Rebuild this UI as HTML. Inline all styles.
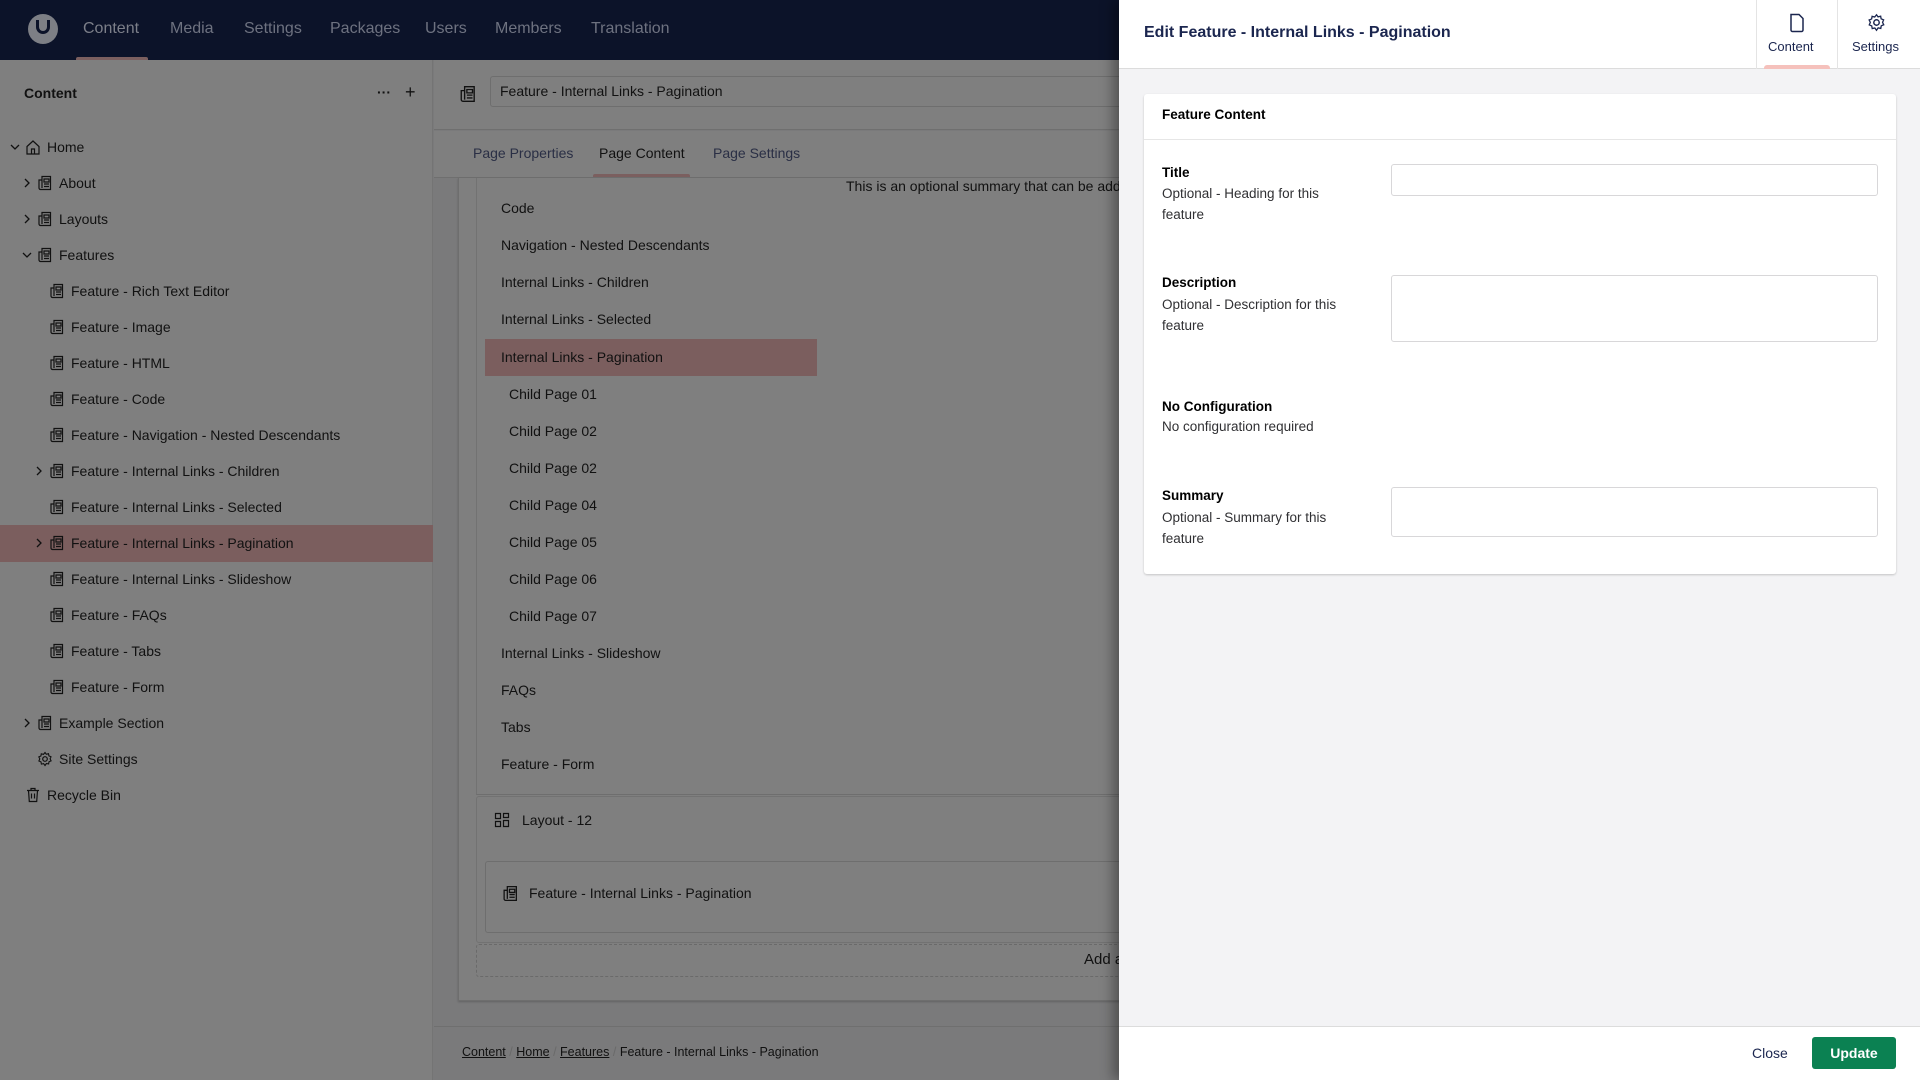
<!DOCTYPE html>
<html><head><meta charset="utf-8"><style>
*{margin:0;padding:0;box-sizing:border-box}
body{width:1920px;height:1080px;overflow:hidden;position:relative;font-family:"Liberation Sans",sans-serif;font-size:14px;color:#111;background:#7a7a7b}
.a{position:absolute}
.t{position:absolute;white-space:nowrap;line-height:20px}
.ic{position:absolute;width:16px;height:16px}
.chev{position:absolute;width:10px;height:10px}
</style></head><body>
<!-- top bar -->
<div class="a" style="left:0;top:0;width:1119px;height:60px;background:#0c1329"></div>
<div class="a" style="left:28px;top:14px;width:30px;height:30px;border-radius:50%;background:#7d7f85"></div>
<div class="a" style="left:36px;top:20px;width:14px;height:14px;border:3px solid #0c1329;border-top:none;border-radius:0 0 7px 7px"></div>
<div class="t" style="left:83px;top:19px;font-size:16px;color:#7c7f89">Content</div>
<div class="a" style="left:76px;top:57px;width:72px;height:3px;background:#7b5f5f;border-radius:2px 2px 0 0"></div>
<div class="t" style="left:170px;top:19px;font-size:16px;color:#6e7280">Media</div>
<div class="t" style="left:244px;top:19px;font-size:16px;color:#6e7280">Settings</div>
<div class="t" style="left:330px;top:19px;font-size:16px;color:#6e7280">Packages</div>
<div class="t" style="left:425px;top:19px;font-size:16px;color:#6e7280">Users</div>
<div class="t" style="left:495px;top:19px;font-size:16px;color:#6e7280">Members</div>
<div class="t" style="left:591px;top:19px;font-size:16px;color:#6e7280">Translation</div>

<!-- sidebar -->
<div class="a" style="left:0;top:60px;width:433px;height:1020px;background:#7f7f7f;border-right:1px solid #747474"></div>
<div class="t" style="left:24px;top:83px;font-weight:bold;font-size:14px">Content</div>
<div class="t" style="left:377px;top:82px;font-weight:bold">···</div>
<div class="t" style="left:405px;top:82px;font-size:18px">+</div>
<div class="a" style="left:0;top:525px;width:433px;height:37px;background:#7b5e5e"></div>

<svg width="0" height="0" style="position:absolute"><defs>
<symbol id="doc" viewBox="0 0 16 16"><path d="M5 1.5h8.5v13H3.5a1.5 1.5 0 0 1-1.5-1.5V5h3z M5 1.5v11.5 M7 4h5v3H7z M7 9h5 M7 11.5h5" fill="none" stroke="#111" stroke-width="1.2"/></symbol>
<symbol id="chr" viewBox="0 0 10 10"><path d="M3 1l4 4-4 4" fill="none" stroke="#111" stroke-width="1.3"/></symbol>
<symbol id="chd" viewBox="0 0 10 10"><path d="M1 3l4 4 4-4" fill="none" stroke="#111" stroke-width="1.3"/></symbol>
</defs></svg>

<svg class="chev" style="left:10px;top:142px"><use href="#chd"/></svg>
<svg class="ic" style="left:25px;top:139px" viewBox="0 0 16 16"><path d="M2 7.5L8 2l6 5.5V15H2z M6.5 15v-5h3v5" fill="none" stroke="#111" stroke-width="1.2"/></svg>
<div class="t" style="left:47px;top:137px">Home</div>

<svg class="chev" style="left:22px;top:178px"><use href="#chr"/></svg>
<svg class="ic" style="left:37px;top:175px"><use href="#doc"/></svg>
<div class="t" style="left:59px;top:173px">About</div>
<svg class="chev" style="left:22px;top:214px"><use href="#chr"/></svg>
<svg class="ic" style="left:37px;top:211px"><use href="#doc"/></svg>
<div class="t" style="left:59px;top:209px">Layouts</div>
<svg class="chev" style="left:22px;top:250px"><use href="#chd"/></svg>
<svg class="ic" style="left:37px;top:247px"><use href="#doc"/></svg>
<div class="t" style="left:59px;top:245px">Features</div>

<svg class="ic" style="left:49px;top:283px"><use href="#doc"/></svg><div class="t" style="left:71px;top:281px">Feature - Rich Text Editor</div>
<svg class="ic" style="left:49px;top:319px"><use href="#doc"/></svg><div class="t" style="left:71px;top:317px">Feature - Image</div>
<svg class="ic" style="left:49px;top:355px"><use href="#doc"/></svg><div class="t" style="left:71px;top:353px">Feature - HTML</div>
<svg class="ic" style="left:49px;top:391px"><use href="#doc"/></svg><div class="t" style="left:71px;top:389px">Feature - Code</div>
<svg class="ic" style="left:49px;top:427px"><use href="#doc"/></svg><div class="t" style="left:71px;top:425px">Feature - Navigation - Nested Descendants</div>
<svg class="chev" style="left:34px;top:466px"><use href="#chr"/></svg>
<svg class="ic" style="left:49px;top:463px"><use href="#doc"/></svg><div class="t" style="left:71px;top:461px">Feature - Internal Links - Children</div>
<svg class="ic" style="left:49px;top:499px"><use href="#doc"/></svg><div class="t" style="left:71px;top:497px">Feature - Internal Links - Selected</div>
<svg class="chev" style="left:34px;top:538px"><use href="#chr"/></svg>
<svg class="ic" style="left:49px;top:535px"><use href="#doc"/></svg><div class="t" style="left:71px;top:533px">Feature - Internal Links - Pagination</div>
<svg class="ic" style="left:49px;top:571px"><use href="#doc"/></svg><div class="t" style="left:71px;top:569px">Feature - Internal Links - Slideshow</div>
<svg class="ic" style="left:49px;top:607px"><use href="#doc"/></svg><div class="t" style="left:71px;top:605px">Feature - FAQs</div>
<svg class="ic" style="left:49px;top:643px"><use href="#doc"/></svg><div class="t" style="left:71px;top:641px">Feature - Tabs</div>
<svg class="ic" style="left:49px;top:679px"><use href="#doc"/></svg><div class="t" style="left:71px;top:677px">Feature - Form</div>
<svg class="chev" style="left:22px;top:718px"><use href="#chr"/></svg>
<svg class="ic" style="left:37px;top:715px"><use href="#doc"/></svg><div class="t" style="left:59px;top:713px">Example Section</div>
<svg class="ic" style="left:37px;top:751px" viewBox="0 0 16 16"><circle cx="8" cy="8" r="2.3" fill="none" stroke="#111" stroke-width="1.2"/><path d="M8 1.5l1.3 1.8 2.2-.6.4 2.2 2.1.9-.9 2.1 1 2-2.1.9-.4 2.2-2.2-.5L8 14.5l-1.4-1.9-2.2.5-.4-2.2-2.1-.9.9-2.1-1-2 2.1-.9.4-2.2 2.2.6z" fill="none" stroke="#111" stroke-width="1.1"/></svg>
<div class="t" style="left:59px;top:749px">Site Settings</div>
<svg class="ic" style="left:25px;top:787px" viewBox="0 0 16 16"><path d="M2 3.5h12 M6 3.5V1.5h4v2 M3.5 3.5l.8 11h7.4l.8-11 M6.5 6.5v5 M9.5 6.5v5" fill="none" stroke="#111" stroke-width="1.2"/></svg>
<div class="t" style="left:47px;top:785px">Recycle Bin</div>

<!-- main header -->
<div class="a" style="left:434px;top:60px;width:685px;height:70px;background:#7f7f7f;border-bottom:1px solid #6f6f6f"></div>
<svg class="ic" style="left:459px;top:85px;width:18px;height:18px"><use href="#doc"/></svg>
<div class="a" style="left:490px;top:76px;width:640px;height:31px;border:1px solid #6e6e6e;border-radius:3px;background:#7f7f7f"></div>
<div class="t" style="left:500px;top:81px">Feature - Internal Links - Pagination</div>
<div class="a" style="left:434px;top:131px;width:685px;height:47px;background:#7f7f7f;border-bottom:1px solid #6f6f6f"></div>
<div class="t" style="left:473px;top:143px;color:#2a2f45">Page Properties</div>
<div class="t" style="left:599px;top:143px;color:#111">Page Content</div>
<div class="a" style="left:593px;top:174px;width:97px;height:3px;background:#7b5f5f;border-radius:2px 2px 0 0"></div>
<div class="t" style="left:713px;top:143px;color:#2a2f45">Page Settings</div>

<!-- main card -->
<div class="a" style="left:458px;top:178px;width:700px;height:823px;background:#7f7f7f;border-left:1px solid #6e6e6e;border-bottom:1px solid #6e6e6e;box-shadow:0 1px 2px rgba(0,0,0,.2)"></div>
<div class="a" style="left:476px;top:178px;width:700px;height:617px;border-left:1px solid #727272;border-bottom:1px solid #6e6e6e"></div>
<div class="t" style="left:846px;top:176px">This is an optional summary that can be added</div>
<div class="a" style="left:485px;top:339px;width:332px;height:37px;background:#7b5e5e"></div>
<div class="t" style="left:501px;top:198px">Code</div>
<div class="t" style="left:501px;top:235px">Navigation - Nested Descendants</div>
<div class="t" style="left:501px;top:272px">Internal Links - Children</div>
<div class="t" style="left:501px;top:309px">Internal Links - Selected</div>
<div class="t" style="left:501px;top:347px">Internal Links - Pagination</div>
<div class="t" style="left:509px;top:384px">Child Page 01</div>
<div class="t" style="left:509px;top:421px">Child Page 02</div>
<div class="t" style="left:509px;top:458px">Child Page 02</div>
<div class="t" style="left:509px;top:495px">Child Page 04</div>
<div class="t" style="left:509px;top:532px">Child Page 05</div>
<div class="t" style="left:509px;top:569px">Child Page 06</div>
<div class="t" style="left:509px;top:606px">Child Page 07</div>
<div class="t" style="left:501px;top:643px">Internal Links - Slideshow</div>
<div class="t" style="left:501px;top:680px">FAQs</div>
<div class="t" style="left:501px;top:717px">Tabs</div>
<div class="t" style="left:501px;top:754px">Feature - Form</div>
<div class="a" style="left:476px;top:796px;width:700px;height:147px;border:1px solid #727272;border-radius:3px"></div>
<svg class="ic" style="left:494px;top:812px" viewBox="0 0 16 16"><path d="M1.5 1.5h5v5h-5z M9.5 1.5h5v4h-5z M1.5 9.5h5v5h-5z M9.5 8.5h5v6h-5z" fill="none" stroke="#111" stroke-width="1.2"/></svg>
<div class="t" style="left:522px;top:810px">Layout - 12</div>
<div class="a" style="left:485px;top:861px;width:700px;height:72px;border:1px solid #6e6e6e;border-radius:3px"></div>
<svg class="ic" style="left:502px;top:885px;width:17px;height:17px"><use href="#doc"/></svg>
<div class="t" style="left:529px;top:883px">Feature - Internal Links - Pagination</div>
<div class="a" style="left:476px;top:944px;width:700px;height:33px;border:1px dashed #6a6a6a;border-radius:3px"></div>
<div class="t" style="left:1084px;top:950px;font-size:15px">Add a</div>
<div class="a" style="left:434px;top:1026px;width:685px;height:1px;background:#6f6f6f"></div>
<div class="t" style="left:462px;top:1042px;font-size:12.5px"><u>Content</u> <span style="color:#6a6a6a">/</span> <u>Home</u> <span style="color:#6a6a6a">/</span> <u>Features</u> <span style="color:#6a6a6a">/</span> Feature - Internal Links - Pagination</div>

<!-- right panel -->
<div class="a" style="left:1119px;top:0;width:801px;height:1080px;background:#f3f3f5;box-shadow:-6px 0 12px rgba(0,0,0,.35)"></div>
<div class="a" style="left:1119px;top:0;width:801px;height:69px;background:#fff;border-bottom:1px solid #dcdcdc"></div>
<div class="t" style="left:1144px;top:23px;font-size:16px;font-weight:bold;color:#1b264f">Edit Feature - Internal Links - Pagination</div>
<div class="a" style="left:1756px;top:0;width:1px;height:69px;background:#e4e4e4"></div>
<div class="a" style="left:1837px;top:0;width:1px;height:69px;background:#e4e4e4"></div>
<svg class="a" style="left:1789px;top:13px" width="16" height="20" viewBox="0 0 16 20"><path d="M2 1.5h8l4 4V17a1.5 1.5 0 0 1-1.5 1.5h-9A1.5 1.5 0 0 1 2 17z" fill="none" stroke="#1b264f" stroke-width="1.5"/></svg>
<div class="t" style="left:1768px;top:37px;font-size:13px;color:#1b264f">Content</div>
<div class="a" style="left:1764px;top:65px;width:66px;height:4px;background:#f5c1bc;border-radius:3px 3px 0 0"></div>
<svg class="a" style="left:1867px;top:13px" width="19" height="19" viewBox="0 0 16 16"><circle cx="8" cy="8" r="2.3" fill="none" stroke="#1b264f" stroke-width="1.2"/><path d="M8 1.5l1.3 1.8 2.2-.6.4 2.2 2.1.9-.9 2.1 1 2-2.1.9-.4 2.2-2.2-.5L8 14.5l-1.4-1.9-2.2.5-.4-2.2-2.1-.9.9-2.1-1-2 2.1-.9.4-2.2 2.2.6z" fill="none" stroke="#1b264f" stroke-width="1.1"/></svg>
<div class="t" style="left:1852px;top:37px;font-size:13px;color:#1b264f">Settings</div>

<div class="a" style="left:1144px;top:94px;width:752px;height:480px;background:#fff;border-radius:3px;box-shadow:0 1px 2px rgba(0,0,0,.2)"></div>
<div class="a" style="left:1144px;top:139px;width:752px;height:1px;background:#e6e6e6"></div>
<div class="t" style="left:1162px;top:105px;font-weight:bold;font-size:13.5px;color:#000">Feature Content</div>

<div class="t" style="left:1162px;top:163px;font-weight:bold;font-size:13.5px;color:#000">Title</div>
<div class="t" style="left:1162px;top:183px;font-size:13.5px;line-height:21px;color:#303033">Optional - Heading for this<br>feature</div>
<div class="a" style="left:1391px;top:164px;width:487px;height:32px;border:1px solid #d8d7d9;border-radius:3px"></div>

<div class="t" style="left:1162px;top:273px;font-weight:bold;font-size:13.5px;color:#000">Description</div>
<div class="t" style="left:1162px;top:294px;font-size:13.5px;line-height:21px;color:#303033">Optional - Description for this<br>feature</div>
<div class="a" style="left:1391px;top:275px;width:487px;height:67px;border:1px solid #d8d7d9;border-radius:3px"></div>

<div class="t" style="left:1162px;top:397px;font-weight:bold;font-size:13.5px;color:#000">No Configuration</div>
<div class="t" style="left:1162px;top:417px;font-size:13.5px;color:#303033">No configuration required</div>

<div class="t" style="left:1162px;top:486px;font-weight:bold;font-size:13.5px;color:#000">Summary</div>
<div class="t" style="left:1162px;top:507px;font-size:13.5px;line-height:21px;color:#303033">Optional - Summary for this<br>feature</div>
<div class="a" style="left:1391px;top:487px;width:487px;height:50px;border:1px solid #d8d7d9;border-radius:3px"></div>

<div class="a" style="left:1119px;top:1026px;width:801px;height:54px;background:#fff;border-top:1px solid #dcdcdc"></div>
<div class="t" style="left:1752px;top:1043px;font-size:14px;color:#1b264f">Close</div>
<div class="a" style="left:1812px;top:1037px;width:84px;height:32px;background:#0b8152;border-radius:3px"></div>
<div class="t" style="left:1812px;top:1043px;width:84px;text-align:center;font-weight:bold;font-size:14px;color:#fff">Update</div>
</body></html>
